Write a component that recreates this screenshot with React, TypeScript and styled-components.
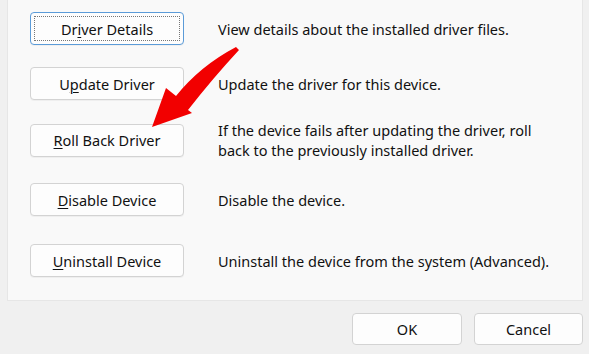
import React from "react";
import styled, { createGlobalStyle } from "styled-components";

const Global = createGlobalStyle`
  html, body { margin: 0; padding: 0; background: #f0f0f0; }
  body { font-family: "Noto Sans", "Open Sans", sans-serif; color: #111; }
`;

const Page = styled.div`
  width: 589px;
  height: 354px;
  position: relative;
  overflow: hidden;
  background: #f0f0f0;
`;

const Panel = styled.div`
  margin-left: 7px;
  width: 576px;
  height: 301px;
  background: #f9f9f9;
  border: 1px solid #e6e6e6;
  border-top: none;
  box-sizing: border-box;
  display: flex;
  flex-direction: column;
  padding-left: 22px;
`;

const Row = styled.div<{ $gap: number; $h?: number }>`
  display: flex;
  align-items: center;
  margin-top: ${(p) => p.$gap}px;
  height: ${(p) => p.$h ?? 33}px;
`;

const Btn = styled.button<{ $focused?: boolean }>`
  box-sizing: border-box;
  width: 154px;
  height: 33px;
  flex: none;
  background: #fdfdfd;
  border: 1px solid ${(p) => (p.$focused ? "#5b9bd8" : "#d3d3d3")};
  border-radius: 4px;
  font-family: "Noto Sans", "Open Sans", sans-serif;
  font-size: 14.5px;
  color: #111;
  padding: 0;
  display: flex;
  align-items: center;
  justify-content: center;
  position: relative;
  box-shadow: 0 1px 0 rgba(0, 0, 0, 0.04);
`;

const FocusRing = styled.span`
  position: absolute;
  inset: 3px;
  border: 1px dotted #777;
`;

const Key = styled.span`
  text-decoration: underline;
  text-underline-offset: 2px;
  text-decoration-thickness: 1px;
`;

const Desc = styled.div`
  margin-left: 34px;
  font-size: 14.5px;
  line-height: 20px;
  width: 340px;
`;

const Footer = styled.div`
  display: flex;
  justify-content: flex-end;
  gap: 12px;
  padding: 12px 6px 0 0;
`;

const DlgBtn = styled.button<{ $w: number }>`
  box-sizing: border-box;
  width: ${(p) => p.$w}px;
  height: 32px;
  background: #fdfdfd;
  border: 1px solid #d3d3d3;
  border-radius: 4px;
  font-family: "Noto Sans", "Open Sans", sans-serif;
  font-size: 14.5px;
  color: #111;
`;

const ArrowSvg = styled.svg`
  position: absolute;
  left: 0;
  top: 0;
  pointer-events: none;
`;

export default function App() {
  return (
    <Page>
      <Global />
      <Panel>
        <Row $gap={12}>
          <Btn $focused>
            <FocusRing />
            <span>Dr<Key>i</Key>ver Details</span>
          </Btn>
          <Desc>View details about the installed driver files.</Desc>
        </Row>
        <Row $gap={22}>
          <Btn>
            <span>U<Key>p</Key>date Driver</span>
          </Btn>
          <Desc>Update the driver for this device.</Desc>
        </Row>
        <Row $gap={20} $h={40}>
          <Btn>
            <span><Key>R</Key>oll Back Driver</span>
          </Btn>
          <Desc>If the device fails after updating the driver, roll back to the previously installed driver.</Desc>
        </Row>
        <Row $gap={23}>
          <Btn>
            <span><Key>D</Key>isable Device</span>
          </Btn>
          <Desc>Disable the device.</Desc>
        </Row>
        <Row $gap={28}>
          <Btn>
            <span><Key>U</Key>ninstall Device</span>
          </Btn>
          <Desc>Uninstall the device from the system (Advanced).</Desc>
        </Row>
      </Panel>
      <Footer>
        <DlgBtn $w={110}>OK</DlgBtn>
        <DlgBtn $w={109}>Cancel</DlgBtn>
      </Footer>
      <ArrowSvg width="589" height="354" viewBox="0 0 589 354">
        <path
          d="M236 47 Q200 66 176 96 L166 88 L152 127 L192 113 L188 110 Q213 78 239 50 Z"
          fill="#f20000"
        />
      </ArrowSvg>
    </Page>
  );
}
